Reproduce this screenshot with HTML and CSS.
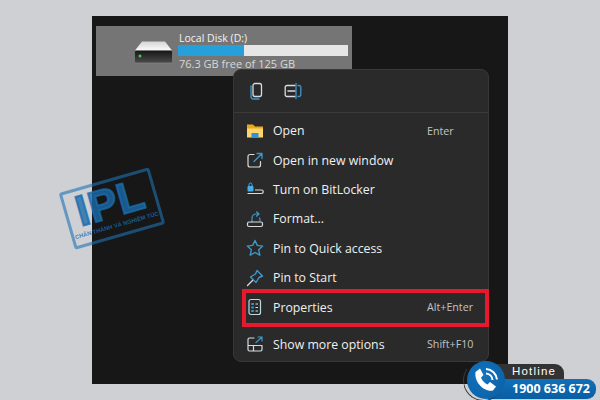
FILE: index.html
```html
<!DOCTYPE html>
<html lang="en">
<head>
<meta charset="utf-8">
<title>Local Disk context menu</title>
<link rel="stylesheet" href="styles.css">
</head>
<body>
<main class="page">
  <section class="shot">
    <div class="tile">
      <svg class="drive" width="40" height="24" viewBox="0 0 40 24">
        <defs>
          <linearGradient id="dt" x1="0" y1="0" x2="0" y2="1"><stop offset="0" stop-color="#d4d4d4"/><stop offset="1" stop-color="#fbfbfb"/></linearGradient>
          <linearGradient id="db" x1="0" y1="0" x2="0" y2="1"><stop offset="0" stop-color="#161616"/><stop offset="1" stop-color="#4c4c4c"/></linearGradient>
        </defs>
        <path d="M1 10.500 L8 1.500 H31 L38 10.500 Z" fill="url(#dt)"/>
        <rect x="0.500" y="10.500" width="38" height="12.500" rx="1.500" fill="url(#db)" stroke="#8a8a8a" stroke-width=".6"/>
        <circle cx="6" cy="16" r="1.500" fill="#35d04a"/>
      </svg>
      <div class="tile-info">
        <div class="tile-name">Local Disk (D:)</div>
        <div class="bar"><div class="bar-fill"></div></div>
        <div class="tile-free">76.3 GB free of 125 GB</div>
      </div>
    </div>

    <div class="menu">
      <div class="menu-top">
        <svg class="ic" width="20" height="20" viewBox="0 0 20 20" fill="none" stroke-linecap="round" stroke-linejoin="round">
          <rect x="6" y="2.500" width="8.500" height="13" rx="2" stroke="#d6dde2" stroke-width="1.300"/>
          <path d="M4 5 V15.500 A2.500 2.500 0 0 0 6.500 18 H12" stroke="#3f97c8" stroke-width="1.300"/>
        </svg>
        <svg class="ic" width="20" height="20" viewBox="0 0 20 20" fill="none" stroke-linecap="round" stroke-linejoin="round">
          <path d="M12 4.500 H4 A1.800 1.800 0 0 0 2.200 6.300 V13.700 A1.800 1.800 0 0 0 4 15.500 H12" stroke="#d6dde2" stroke-width="1.300"/>
          <path d="M5 10 H12" stroke="#d6dde2" stroke-width="1.600"/>
          <path d="M13 2.500 V17.500 M15 4.500 H16 A1.800 1.800 0 0 1 17.800 6.300 V13.700 A1.800 1.800 0 0 1 16 15.500 H15" stroke="#3f97c8" stroke-width="1.300"/>
        </svg>
      </div>
      <div class="menu-list">
        <div class="item">
          <svg class="ic" width="18" height="18" viewBox="0 0 18 18"><path d="M1 2.500 H7 L9 4.500 H17 V15 H1 Z" fill="#e9a91f"/><path d="M1 6.500 H17 V15.500 H1 Z" fill="#fcd66c"/><rect x="5.500" y="11" width="7" height="4.500" fill="#2f8fd8"/></svg>
          <span class="label">Open</span><span class="key">Enter</span>
        </div>
        <div class="item">
          <svg class="ic" width="18" height="18" viewBox="0 0 18 18" fill="none" stroke-linecap="round" stroke-linejoin="round"><path d="M8 3.500 H4 A2 2 0 0 0 2 5.500 V14 A2 2 0 0 0 4 16 H12.500 A2 2 0 0 0 14.500 14 V10.500" stroke="#d6dde2" stroke-width="1.200"/><path d="M8 10.500 L16 2.500 M11 2.500 H16 V7.500" stroke="#3f97c8" stroke-width="1.300"/></svg>
          <span class="label">Open in new window</span>
        </div>
        <div class="item">
          <svg class="ic" width="18" height="18" viewBox="0 0 18 18" fill="none"><rect x="1.500" y="6" width="6" height="5.500" rx="1" fill="#45aee6"/><path d="M3 6 V4.500 A1.500 1.500 0 0 1 6 4.500 V6" stroke="#45aee6" stroke-width="1"/><path d="M1.500 13.500 H15.500 A1.500 1.500 0 0 0 15.500 10 H9" stroke="#d6dde2" stroke-width="1.200"/></svg>
          <span class="label">Turn on BitLocker</span>
        </div>
        <div class="item">
          <svg class="ic" width="18" height="18" viewBox="0 0 18 18" fill="none" stroke-linecap="round" stroke-linejoin="round"><path d="M4 11 V7 A4 4 0 0 1 8 3 H11 M8.500 .8 L11 3 L8.500 5.200" stroke="#3f97c8" stroke-width="1.200" transform="translate(2 1)"/><path d="M14 11 A4 4 0 0 0 13.500 8" stroke="#3f97c8" stroke-width="1.200"/><rect x="1.500" y="12" width="15" height="4.500" rx="1.500" stroke="#d6dde2" stroke-width="1.200"/></svg>
          <span class="label">Format...</span>
        </div>
        <div class="item">
          <svg class="ic" width="18" height="18" viewBox="0 0 18 18" fill="none" stroke-linejoin="round"><path d="M9 1.500 L11.300 6.400 L16.700 7.100 L12.700 10.800 L13.800 16.200 L9 13.500 L4.200 16.200 L5.300 10.800 L1.300 7.100 L6.700 6.400 Z" stroke="#3f97c8" stroke-width="1.400"/></svg>
          <span class="label">Pin to Quick access</span>
        </div>
        <div class="item">
          <svg class="ic" width="18" height="18" viewBox="0 0 18 18" fill="none" stroke-linejoin="round" stroke-linecap="round"><path d="M11 1.500 L16.500 7 L13 8.500 L10 13.500 L4.500 8 L9.500 5 Z" stroke="#3f97c8" stroke-width="1.400"/><path d="M6.500 11.500 L1.500 16.500" stroke="#d6dde2" stroke-width="1.300"/></svg>
          <span class="label">Pin to Start</span>
        </div>
        <div class="item">
          <svg class="ic" width="18" height="18" viewBox="0 0 18 18" fill="none"><rect x="3" y="1.500" width="11.500" height="15" rx="2" stroke="#b9dbe6" stroke-width="1.200"/><path d="M9.500 6 H12 M9.500 9.500 H12 M9.500 13 H12" stroke="#d6dde2"/><path d="M5.300 6 H7.800 M5.300 9.500 H7.800 M5.300 13 H7.800" stroke="#3f97c8" stroke-width="2"/></svg>
          <span class="label">Properties</span><span class="key">Alt+Enter</span>
        </div>
      </div>
      <div class="menu-more">
        <div class="item">
          <svg class="ic" width="18" height="18" viewBox="0 0 18 18" fill="none" stroke-linejoin="round" stroke-linecap="round"><path d="M8 3 H3.500 A1.500 1.500 0 0 0 2 4.500 V14.500 A1.500 1.500 0 0 0 3.500 16 H14.500 A1.500 1.500 0 0 0 16 14.500 V10.500 H7.500 V16 M2 10.500 H7.500" stroke="#d6dde2" stroke-width="1.200"/><path d="M10 7.500 L16 2 M12 2 H16 V6" stroke="#3f97c8" stroke-width="1.200"/></svg>
          <span class="label">Show more options</span><span class="key">Shift+F10</span>
        </div>
      </div>
      <div class="highlight"></div>
    </div>
  </section>

  <div class="stamp">
    <div class="stamp-main">IPL</div>
    <div class="stamp-sub">CHÂN THÀNH VÀ NGHIÊM TÚC</div>
  </div>

  <div class="hotline">
    <div class="hot-label">Hotline</div>
    <div class="hot-num">1900 636 672</div>
    <div class="hot-ring"></div>
    <div class="hot-badge">
      <svg width="30" height="30" viewBox="0 0 30 30" fill="none"><path d="M4.500 7 L9 3.500 L12.500 10 L10 12.500 C11 15.500 13.500 18 16.500 19.500 L19 17 L25 21.500 L22 25.500 C13 27.500 3 17 4.500 7 Z" fill="#fff"/><path d="M15 4 A11.500 11.500 0 0 1 26 14.500 M15 8.500 A7 7 0 0 1 21.500 15" stroke="#fff" stroke-width="2"/></svg>
    </div>
  </div>
</main>
</body>
</html>
```

FILE: styles.css
```css
* { box-sizing: border-box; }
html, body { margin: 0; padding: 0; }
body {
  width: 600px;
  height: 400px;
  overflow: hidden;
  background: #cfd0d4;
  font-family: "Open Sans", "Noto Sans", sans-serif;
}
.page {
  position: relative;
  width: 600px;
  height: 400px;
  padding: 16px 92px;
}
.shot {
  position: relative;
  width: 416px;
  height: 368px;
  background: #171717;
  padding: 10px 4px;
}
.tile {
  width: 256px;
  height: 50px;
  background: #757575;
  display: flex;
  align-items: center;
  padding-left: 38px;
  gap: 4px;
  color: #eee;
}
.drive { margin-top: 2px; flex: none; }
.tile-info { display: flex; flex-direction: column; width: 170px; }
.tile-name { font-size: 10.500px; line-height: 14px; color: #f2f2f2; padding-left: 1px; }
.bar {
  height: 11px;
  background: #e6e6e6;
  width: 170px;
}
.bar-fill { width: 39%; height: 100%; background: #26a0da; }
.tile-free { font-size: 11px; line-height: 15px; color: #d8d8d8; padding-left: 1px; }

.menu {
  position: absolute;
  left: 141px;
  top: 53px;
  width: 256px;
  height: 293px;
  background: #2a2a2a;
  border: 1px solid #383838;
  border-radius: 8px;
  color: #eee;
  display: flex;
  flex-direction: column;
}
.menu-top {
  height: 43px;
  display: flex;
  align-items: center;
  gap: 16px;
  padding-left: 13px;
  border-bottom: 1px solid #3a3a3a;
}
.menu-list { padding-top: 3px; }
.item {
  height: 29.400px;
  display: flex;
  align-items: center;
  padding: 0 14px 0 12px;
  gap: 9px;
}
.ic { flex: none; }
.label { flex: 1; font-size: 12.300px; color: #f0f0f0; }
.key { width: 47px; font-size: 10.700px; color: #c2c2c2; white-space: nowrap; }
.menu-more { margin-top: 8px; }
.highlight {
  position: absolute;
  left: 8px;
  top: 219px;
  width: 247px;
  height: 38px;
  border: 4px solid #e8192c;
}

.stamp {
  position: absolute;
  left: 65px;
  top: 179px;
  width: 94px;
  height: 59px;
  border: 3px solid rgba(30, 115, 180, .6);
  border-radius: 3px;
  transform: rotate(-16deg);
  text-align: center;
  color: rgba(26, 108, 172, .8);
}
.stamp-main {
  font-family: "Liberation Sans", sans-serif;
  font-weight: 700;
  font-size: 43px;
  line-height: 40px;
  letter-spacing: 1px;
  -webkit-text-stroke: 2px rgba(26, 108, 172, .8);
}
.stamp-sub {
  font-family: "Liberation Sans", sans-serif;
  font-weight: 700;
  font-size: 5.800px;
  line-height: 8px;
  white-space: nowrap;
}

.hotline {
  position: absolute;
  left: 463px;
  top: 360px;
  width: 137px;
  height: 40px;
}
.hot-label {
  position: absolute;
  left: 25px;
  top: 4px;
  width: 76px;
  height: 15px;
  padding-left: 24px;
  background: #333;
  border-radius: 0 9px 0 0;
  color: #fff;
  font-family: "Liberation Sans", sans-serif;
  font-size: 11.500px;
  line-height: 15px;
  letter-spacing: 1.200px;
}
.hot-num {
  position: absolute;
  left: 25px;
  top: 19px;
  width: 108px;
  height: 20px;
  padding-left: 24px;
  background: linear-gradient(#1170b8, #0a5da3);
  border-radius: 0 9px 9px 0;
  color: #fff;
  font-family: "Open Sans", sans-serif;
  font-weight: 700;
  font-size: 12.500px;
  line-height: 20px;
  white-space: nowrap;
}
.hot-ring {
  position: absolute;
  left: 0;
  top: 0;
  width: 41px;
  height: 41px;
  border-radius: 50%;
  border: 1.500px solid transparent;
  border-left-color: #3a3a3a;
  border-bottom-color: #3a3a3a;
  transform: rotate(-10deg);
}
.hot-badge {
  position: absolute;
  left: 4px;
  top: 1px;
  width: 38px;
  height: 38px;
  border-radius: 50%;
  background: radial-gradient(circle at 40% 40%, #1274bd, #0a5da3);
  display: flex;
  align-items: center;
  justify-content: center;
}
```
